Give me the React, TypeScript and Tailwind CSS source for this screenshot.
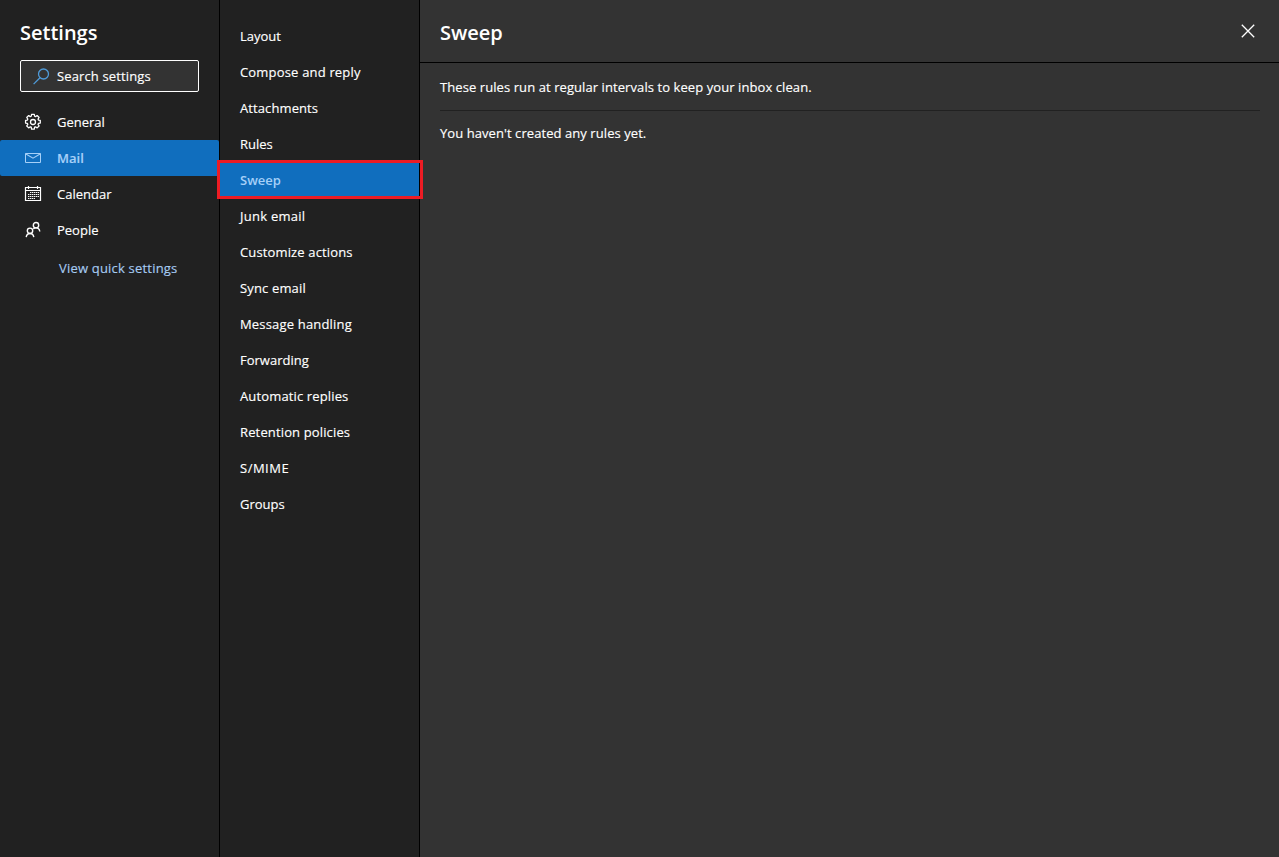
import type { ReactNode } from "react";

interface Category {
  id: string;
  label: string;
  icon: ReactNode;
}

interface MailPage {
  label: string;
  tracking?: string;
}

function GearIcon() {
  return (
    <svg width="18" height="18" viewBox="0 0 18 18" fill="none" stroke="currentColor" strokeWidth="1.3" strokeLinejoin="round">
      <path d="M7.6 1.2h2.8l.3 1.9 1 .4 1.6-1.100 2 2-1.100 1.600.4 1 1.900.3v2.800l-1.900.3-.4 1 1.100 1.600-2 2-1.600-1.100-1 .4-.3 1.900H7.600l-.3-1.900-1-.4-1.600 1.100-2-2 1.100-1.600-.4-1-1.900-.3V7.300l1.900-.3.4-1-1.100-1.600 2-2 1.600 1.100 1-.4z" transform="translate(.1 .2) scale(.98)" />
      <circle cx="9" cy="9" r="2.5" />
    </svg>
  );
}

function MailIcon() {
  return (
    <svg width="18" height="18" viewBox="0 0 18 18" fill="none" stroke="currentColor">
      <path d="M1.5 4.5h15v9h-15z" />
      <path d="M1.5 4.8L9 9.2l7.5-4.4" strokeWidth="1.1" />
    </svg>
  );
}

function CalendarIcon() {
  return (
    <svg width="18" height="18" viewBox="0 0 18 18" fill="none" stroke="currentColor">
      <path d="M1.5 2.5h15v13h-15zM1.5 5.5h15M4.5 1v3M13.5 1v3" strokeWidth="1.2" />
      <path d="M6 7.5h9M4 9.5h11M4 11.5h11M4 13.5h7" strokeDasharray="1.4 0.6" />
    </svg>
  );
}

function PeopleIcon() {
  return (
    <svg width="18" height="18" viewBox="0 0 18 18" fill="none" stroke="currentColor" strokeWidth="1.4">
      <circle cx="12" cy="4.2" r="2.7" />
      <circle cx="6" cy="9.8" r="2.7" />
      <path d="M2.2 16.2c.3-2.2 1.8-3.7 3.8-3.7s3.5 1.5 3.8 3.7M9.3 8c.7-.7 1.6-1.1 2.7-1.1 2 0 3.5 1.5 3.8 3.6" />
    </svg>
  );
}

const categories: Category[] = [
  { id: "general", label: "General", icon: <GearIcon /> },
  { id: "mail", label: "Mail", icon: <MailIcon /> },
  { id: "calendar", label: "Calendar", icon: <CalendarIcon /> },
  { id: "people", label: "People", icon: <PeopleIcon /> }
];

const mailPages: MailPage[] = [
  { label: "Layout" },
  { label: "Compose and reply", tracking: "tracking-[0.18px]" },
  { label: "Attachments", tracking: "tracking-[0.1px]" },
  { label: "Rules" },
  { label: "Sweep" },
  { label: "Junk email", tracking: "tracking-[0.25px]" },
  { label: "Customize actions", tracking: "tracking-[0.14px]" },
  { label: "Sync email", tracking: "tracking-[0.15px]" },
  { label: "Message handling", tracking: "tracking-[0.18px]" },
  { label: "Forwarding" },
  { label: "Automatic replies", tracking: "tracking-[0.14px]" },
  { label: "Retention policies", tracking: "tracking-[0.14px]" },
  { label: "S/MIME", tracking: "tracking-[0.5px]" },
  { label: "Groups" }
];

function Sidebar() {
  return (
    <aside className="flex w-[220px] shrink-0 flex-col border-r border-black bg-[#212121]">
      <h1 className="px-5 pt-[19px] text-[20px] leading-7 font-semibold [-webkit-text-stroke:0]">Settings</h1>
      <div className="mx-5 mt-[13px] flex h-8 w-[179px] items-center rounded-[2px] border border-white bg-[#333333] pl-3">
        <svg className="shrink-0 text-[#4f9bd9]" width="17" height="17" viewBox="0 0 17 17" fill="none" stroke="currentColor" strokeWidth="1.3">
          <circle cx="10.5" cy="6" r="5" />
          <path d="M7 9.7L.6 16.1" />
        </svg>
        <span className="ml-[7px] pt-0.5 tracking-[0.13px]">Search settings</span>
      </div>
      <nav className="mt-3">
        {categories.map(category => (
          <div
            key={category.id}
            className={
              category.id === "mail"
                ? "flex h-9 items-center rounded-[2px] bg-[#106ebe] pl-6 font-semibold text-[#a6d0f8]"
                : "flex h-9 items-center pl-6"
            }
          >
            {category.icon}
            <span className="ml-[15px] pt-0.5">{category.label}</span>
          </div>
        ))}
      </nav>
      <a className="mt-2.5 ml-[59px] leading-5 tracking-[0.2px] text-[#a6cbf2]">View quick settings</a>
    </aside>
  );
}

function MailNav() {
  return (
    <nav className="w-[200px] shrink-0 border-r border-black bg-[#212121] pt-[18px]">
      {mailPages.map(page => (
        <div
          key={page.label}
          className={
            page.label === "Sweep"
              ? "relative flex h-9 items-center bg-[#106ebe] pl-5 font-semibold text-[#a6d0f8] [-webkit-text-stroke:0]"
              : "flex h-9 items-center pl-5"
          }
        >
          <span className={`pt-0.5 ${page.tracking ?? ""}`}>{page.label}</span>
          {page.label === "Sweep" && (
            <div className="absolute -top-0.5 -left-[3px] h-[39px] w-[206px] border-3 border-[#ed1c24]" />
          )}
        </div>
      ))}
    </nav>
  );
}

export default function App() {
  return (
    <div className="flex h-[857px] w-[1279px] overflow-hidden bg-[#333333] font-['Open_Sans','Noto_Sans',sans-serif] text-[13px] text-white [-webkit-text-stroke:0.15px]">
      <Sidebar />
      <MailNav />
      <main className="flex-1">
        <header className="flex h-[63px] items-start justify-between border-b border-black pt-[19px] pr-6 pl-5">
          <h2 className="text-[20px] leading-7 font-semibold [-webkit-text-stroke:0]">Sweep</h2>
          <svg className="mt-[5px]" width="14" height="14" viewBox="0 0 14 14" fill="none" stroke="currentColor" strokeWidth="1.3">
            <path d="M.8 .8l12.4 12.4M13.2 .8L.8 13.2" />
          </svg>
        </header>
        <div className="mr-[19px] ml-5">
          <p className="h-12 border-b border-[#212121] pt-3.5 leading-5 tracking-[0.08px]">
            These rules run at regular intervals to keep your inbox clean.
          </p>
          <p className="pt-3 leading-5 tracking-[0.07px]">You haven't created any rules yet.</p>
        </div>
      </main>
    </div>
  );
}
